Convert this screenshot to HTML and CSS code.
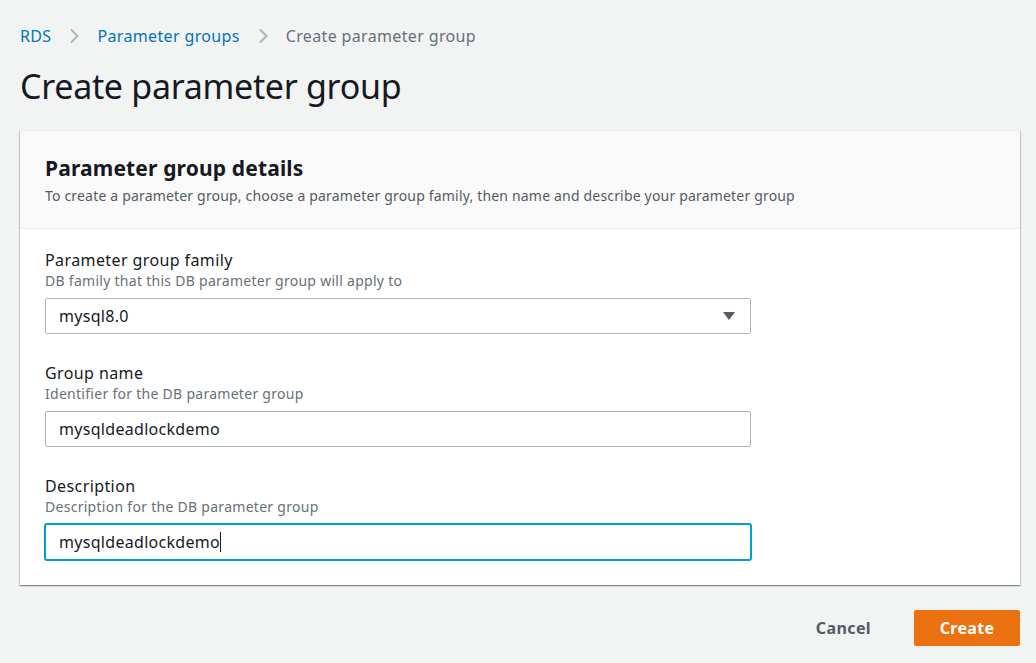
FILE: index.html
```html
<!DOCTYPE html>
<html lang="en">
<head>
<meta charset="utf-8">
<title>Create parameter group</title>
<link rel="stylesheet" href="styles.css">
</head>
<body>
<main class="page">
  <nav class="breadcrumbs">
    <a class="crumb-link" href="#">RDS</a>
    <svg class="chev" width="10" height="16" viewBox="0 0 10 16"><path d="M2 1.5 L8.5 8 L2 14.5" fill="none" stroke="#aab7b8" stroke-width="2"/></svg>
    <a class="crumb-link" href="#">Parameter groups</a>
    <svg class="chev" width="10" height="16" viewBox="0 0 10 16"><path d="M2 1.5 L8.5 8 L2 14.5" fill="none" stroke="#aab7b8" stroke-width="2"/></svg>
    <span class="crumb-current">Create parameter group</span>
  </nav>
  <h1 class="page-title">Create parameter group</h1>

  <section class="card">
    <header class="card-header">
      <h2 class="card-title">Parameter group details</h2>
      <p class="card-desc">To create a parameter group, choose a parameter group family, then name and describe your parameter group</p>
    </header>
    <div class="card-body">
      <div class="field">
        <div class="label">Parameter group family</div>
        <div class="hint">DB family that this DB parameter group will apply to</div>
        <div class="control select">
          <span class="value">mysql8.0</span>
          <svg class="caret" width="12" height="8" viewBox="0 0 12 8"><path d="M0 0 H12 L6 8 Z" fill="#545b64"/></svg>
        </div>
      </div>
      <div class="field">
        <div class="label">Group name</div>
        <div class="hint">Identifier for the DB parameter group</div>
        <div class="control"><span class="value">mysqldeadlockdemo</span></div>
      </div>
      <div class="field">
        <div class="label">Description</div>
        <div class="hint">Description for the DB parameter group</div>
        <div class="control focused"><span class="value">mysqldeadlockdemo</span><span class="cursor"></span></div>
      </div>
    </div>
  </section>

  <div class="actions">
    <button class="btn-link">Cancel</button>
    <button class="btn-primary">Create</button>
  </div>
</main>
</body>
</html>
```

FILE: styles.css
```css
* { box-sizing: border-box; }
html, body { margin: 0; padding: 0; }
body {
  background: #f2f3f3;
  font-family: "Noto Sans", "Open Sans", sans-serif;
  color: #16191f;
  width: 1036px;
  height: 663px;
  overflow: hidden;
}
.page {
  padding: 25px 16px 0 20px;
}
.breadcrumbs {
  display: flex;
  align-items: center;
  height: 22px;
  font-size: 16px;
  line-height: 22px;
  letter-spacing: 0.35px;
}
.crumb-link {
  color: #0073bb;
  text-decoration: none;
}
.chev {
  margin: 0 18px;
}
.crumb-current {
  color: #687078;
}
.page-title {
  margin: 16px 0 0 0;
  font-size: 34px;
  line-height: 46px;
  font-weight: 400;
  letter-spacing: -0.3px;
}
.card {
  margin-top: 21px;
  background: #fff;
  box-shadow: 0 1px 1px 0 rgba(0,28,36,.3), 1px 1px 1px 0 rgba(0,28,36,.15), -1px 1px 1px 0 rgba(0,28,36,.15);
  border-top: 1px solid #eaeded;
}
.card-header {
  background: #fafafa;
  border-bottom: 1px solid #eaeded;
  padding: 22px 25px 22px 25px;
}
.card-title {
  margin: 0;
  font-size: 21px;
  line-height: 30px;
  font-weight: 700;
  letter-spacing: 0.15px;
}
.card-desc {
  margin: 3px 0 0 0;
  font-size: 14px;
  line-height: 20px;
  color: #545b64;
  letter-spacing: 0.18px;
}
.card-body {
  padding: 20px 25px 25px 25px;
  display: flex;
  flex-direction: column;
  gap: 28px;
}
.field {
  display: flex;
  flex-direction: column;
}
.label {
  font-size: 16px;
  line-height: 22px;
  letter-spacing: 0.4px;
}
.hint {
  font-size: 14px;
  line-height: 20px;
  color: #687078;
  letter-spacing: 0.28px;
}
.control {
  margin-top: 7px;
  width: 706px;
  height: 36px;
  border: 1px solid #aab7b8;
  border-radius: 2px;
  background: #fff;
  display: flex;
  align-items: center;
  padding: 0 15px 0 13px;
  font-size: 16px;
  letter-spacing: 0.3px;
}
.select {
  justify-content: space-between;
}
.focused {
  border-color: #00a1c9;
  box-shadow: 0 0 0 1px #00a1c9;
}
.cursor {
  display: inline-block;
  width: 1px;
  height: 20px;
  background: #16191f;
}
.actions {
  display: flex;
  justify-content: flex-end;
  align-items: center;
  gap: 23px;
  margin-top: 25px;
}
.btn-link {
  border: 0;
  background: transparent;
  font-family: inherit;
  font-size: 16px;
  font-weight: 700;
  color: #545b64;
  padding: 0 20px;
  height: 36px;
  letter-spacing: 0.4px;
}
.btn-primary {
  border: 0;
  border-radius: 2px;
  background: #ec7211;
  color: #fff;
  font-family: inherit;
  font-size: 16px;
  font-weight: 700;
  height: 36px;
  width: 106px;
  padding: 0;
  letter-spacing: 0.3px;
}
```
